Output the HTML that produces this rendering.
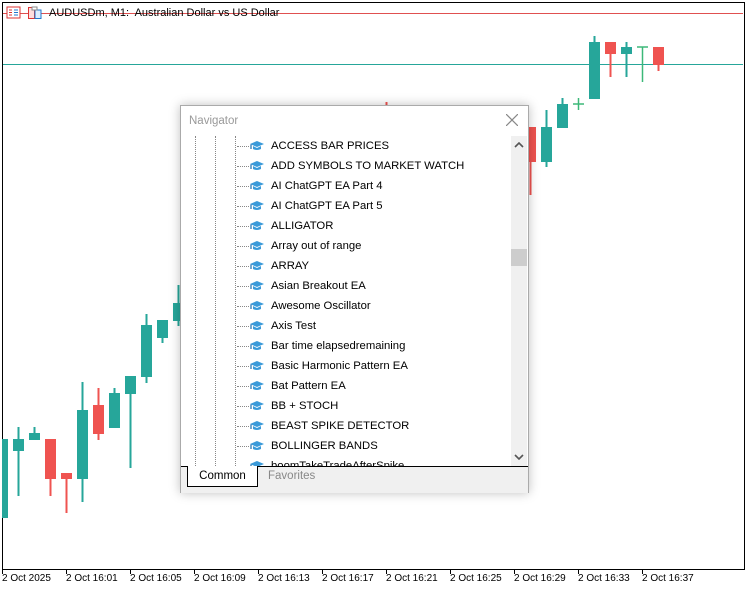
<!DOCTYPE html>
<html><head><style>
body{margin:0;width:748px;height:590px;background:#fff;position:relative;overflow:hidden;font-family:"Liberation Sans",sans-serif}
.frame{position:absolute;left:2px;top:2px;width:741px;height:566px;border:1px solid #000;border-top:1px solid #000}
.t{position:absolute;top:573px;font-size:10px;color:#000}
.tick{position:absolute;top:569px;width:1px;height:5px;background:#000}
#dlg{position:absolute;left:180px;top:105px;width:347px;height:386px;background:#fff;border:1px solid #aaa;box-shadow:0 0 10px rgba(0,0,0,.25)}
.row{position:absolute;left:89px;font-size:11.3px;color:#000;white-space:nowrap;height:20px;line-height:20px}
.ic{position:absolute;left:67px;width:16px;height:14px}
.dl{position:absolute;left:55px;width:12px;border-top:1px dotted #888}
</style></head><body>
<div class="frame"></div>
<div style="position:absolute;left:3px;top:13px;width:740px;height:1px;background:#e05050"></div>
<div style="position:absolute;left:3px;top:64px;width:740px;height:1px;background:#26a69a"></div>
<svg style="position:absolute;left:0;top:0" width="748" height="590">
<g fill="#26a69a" stroke="#26a69a" stroke-width="2">
<rect x="2" y="439" width="6" height="79" stroke="none"/>
<line x1="18.5" y1="427" x2="18.5" y2="496"/><rect x="13" y="439" width="11" height="12" stroke="none"/>
<line x1="34.5" y1="427" x2="34.5" y2="433"/><rect x="29" y="433" width="11" height="7" stroke="none"/>
<line x1="82.5" y1="382" x2="82.5" y2="502"/><rect x="77" y="410" width="11" height="69" stroke="none"/>
<line x1="114.5" y1="388" x2="114.5" y2="428"/><rect x="109" y="393" width="11" height="35" stroke="none"/>
<line x1="130.5" y1="376" x2="130.5" y2="468"/><rect x="125" y="376" width="11" height="18" stroke="none"/>
<line x1="146.5" y1="314" x2="146.5" y2="383"/><rect x="141" y="325" width="11" height="52" stroke="none"/>
<line x1="162.5" y1="320" x2="162.5" y2="343"/><rect x="157" y="320" width="11" height="18" stroke="none"/>
<line x1="178.5" y1="285" x2="178.5" y2="326"/><rect x="173" y="303" width="11" height="18" stroke="none"/>
<line x1="546.5" y1="110" x2="546.5" y2="167"/><rect x="541" y="127" width="11" height="35" stroke="none"/>
<line x1="562.5" y1="98" x2="562.5" y2="128"/><rect x="557" y="104" width="11" height="24" stroke="none"/>
<line x1="594.5" y1="36" x2="594.5" y2="99"/><rect x="589" y="42" width="11" height="57" stroke="none"/>
<line x1="626.5" y1="42" x2="626.5" y2="77"/><rect x="621" y="47" width="11" height="7" stroke="none"/>
</g>
<g stroke="#3cb878" stroke-width="1.5"><line x1="573" y1="104" x2="584" y2="104"/><line x1="578.5" y1="98" x2="578.5" y2="110"/>
<line x1="637" y1="47" x2="648" y2="47"/><line x1="642.5" y1="47" x2="642.5" y2="82"/></g>
<g fill="#ef5350" stroke="#ef5350" stroke-width="2">
<line x1="50.5" y1="439" x2="50.5" y2="496"/><rect x="45" y="439" width="11" height="40" stroke="none"/>
<line x1="66.5" y1="473" x2="66.5" y2="513"/><rect x="61" y="473" width="11" height="6" stroke="none"/>
<line x1="98.5" y1="388" x2="98.5" y2="440"/><rect x="93" y="405" width="11" height="29" stroke="none"/>
<line x1="530.5" y1="127" x2="530.5" y2="195"/><rect x="525" y="127" width="11" height="35" stroke="none"/>
<line x1="610.5" y1="42" x2="610.5" y2="77"/><rect x="605" y="42" width="11" height="12" stroke="none"/>
<line x1="658.5" y1="47" x2="658.5" y2="71"/><rect x="653" y="47" width="11" height="18" stroke="none"/>
<line x1="386.5" y1="102" x2="386.5" y2="106"/>
</g>
<g transform="translate(7,7)"><rect x="0" y="0" width="13" height="11" fill="#fff" stroke="#d33"/><line x1="2" y1="3" x2="5" y2="3" stroke="#d33"/><line x1="2" y1="5.5" x2="5" y2="5.5" stroke="#d33"/><line x1="2" y1="8" x2="5" y2="8" stroke="#d33"/><line x1="7" y1="3" x2="11" y2="3" stroke="#27c"/><line x1="7" y1="5.5" x2="11" y2="5.5" stroke="#27c"/><line x1="7" y1="8" x2="11" y2="8" stroke="#27c"/></g>
<g transform="translate(28,7)"><rect x="0.5" y="0.5" width="6" height="11" fill="#fdd" stroke="#d33"/><rect x="7" y="3" width="6" height="8.5" fill="#def" stroke="#27c"/><rect x="4" y="0" width="5" height="3" fill="#fff" stroke="#888"/></g>
</svg>
<div style="position:absolute;left:49px;top:7px;font-size:11px;color:#000">AUDUSDm, M1:&nbsp; Australian Dollar vs US Dollar</div>
<div class="tick" style="left:2px"></div><div class="tick" style="left:66px"></div><div class="tick" style="left:130px"></div><div class="tick" style="left:194px"></div><div class="tick" style="left:258px"></div><div class="tick" style="left:322px"></div><div class="tick" style="left:386px"></div><div class="tick" style="left:450px"></div><div class="tick" style="left:514px"></div><div class="tick" style="left:578px"></div><div class="tick" style="left:642px"></div>
<div class="t" style="left:2px">2 Oct 2025</div><div class="t" style="left:66px">2 Oct 16:01</div><div class="t" style="left:130px">2 Oct 16:05</div><div class="t" style="left:194px">2 Oct 16:09</div><div class="t" style="left:258px">2 Oct 16:13</div><div class="t" style="left:322px">2 Oct 16:17</div><div class="t" style="left:386px">2 Oct 16:21</div><div class="t" style="left:450px">2 Oct 16:25</div><div class="t" style="left:514px">2 Oct 16:29</div><div class="t" style="left:578px">2 Oct 16:33</div><div class="t" style="left:642px">2 Oct 16:37</div>

<div id="dlg">
<div style="position:absolute;left:8px;top:9px;font-size:11.5px;color:#999">Navigator</div>
<svg style="position:absolute;left:325px;top:8px" width="12" height="12"><path d="M0 0L12 12M12 0L0 12" stroke="#888" stroke-width="1.2"/></svg>
<div style="position:absolute;left:1px;top:30px;width:330px;height:330px;overflow:hidden">
<div style="position:absolute;left:13px;top:0;height:330px;border-left:1px dotted #888"></div>
<div style="position:absolute;left:33px;top:0;height:330px;border-left:1px dotted #888"></div>
<div style="position:absolute;left:53px;top:0;height:330px;border-left:1px dotted #888"></div>
<div id="rows"></div>
</div>
<div style="position:absolute;left:330px;top:30px;width:16px;height:330px;background:#f0f0f0">
<div style="position:absolute;left:0;top:113px;width:16px;height:17px;background:#cdcdcd"></div>
<svg style="position:absolute;left:3px;top:6px" width="10" height="6"><path d="M1 5L5 1L9 5" stroke="#555" stroke-width="1.6" fill="none"/></svg>
<svg style="position:absolute;left:3px;top:318px" width="10" height="6"><path d="M1 1L5 5L9 1" stroke="#555" stroke-width="1.6" fill="none"/></svg>
</div>
<div style="position:absolute;left:0;top:360px;width:347px;height:26px;background:#f0f0f0;border-top:1px solid #000"></div>
<div style="position:absolute;left:6px;top:360px;width:69px;height:20px;background:#fff;border:1px solid #000;border-top:none;font-size:11.5px;line-height:20px;text-align:center">Common</div>
<div style="position:absolute;left:87px;top:364px;font-size:11.5px;color:#888">Favorites</div>
</div>
<script>
var n=["ACCESS BAR PRICES","ADD SYMBOLS TO MARKET WATCH","AI ChatGPT EA Part 4","AI ChatGPT EA Part 5","ALLIGATOR","Array out of range","ARRAY","Asian Breakout EA","Awesome Oscillator","Axis Test","Bar time elapsedremaining","Basic Harmonic Pattern EA","Bat Pattern EA","BB + STOCH","BEAST SPIKE DETECTOR","BOLLINGER BANDS","boomTakeTradeAfterSpike"];
var h="";n.forEach(function(s,i){var y=i*20;h+='<div class="dl" style="top:'+(y+10)+'px"></div><svg class="ic" style="top:'+(y+3)+'px" viewBox="0 0 16 14"><path d="M1 5L8 2L15 5L8 8Z" fill="#3a9ad9"/><path d="M4 7V10Q8 12 12 10V7L8 9Z" fill="#3a9ad9"/><path d="M2 5.5V10" stroke="#1a6aa9" stroke-width="1.2"/></svg><div class="row" style="top:'+y+'px">'+s+'</div>';});
document.getElementById("rows").innerHTML=h;
</script>
</body></html>
